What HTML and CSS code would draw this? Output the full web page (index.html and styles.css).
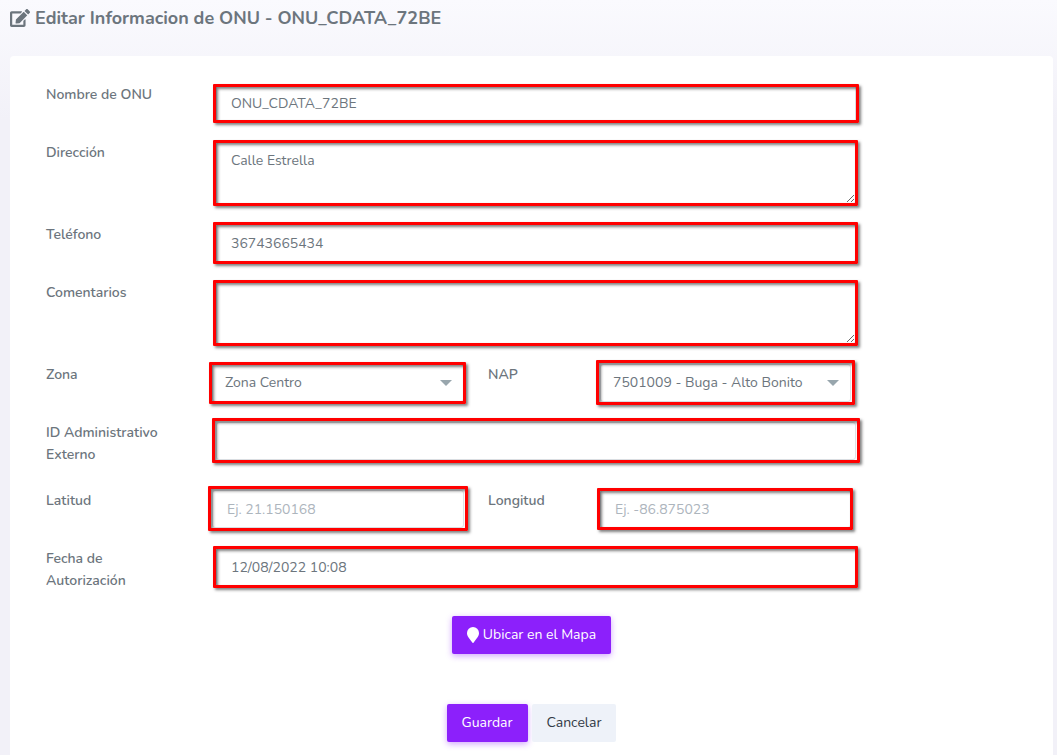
FILE: index.html
```html
<!DOCTYPE html>
<html lang="es">
<head>
	<meta charset="utf-8">
	<title>Editar Informacion de ONU</title>
	<link rel="stylesheet" href="styles.css">
</head>
<body>
	<h1 class="page-title">
		<svg class="title-icon" viewBox="0 0 576 512" aria-hidden="true"><path fill="currentColor" d="M402.6 83.200l90.200 90.200c3.800 3.800 3.800 10 0 13.800L274.400 405.600l-92.800 10.300c-12.400 1.400-22.900-9.100-21.500-21.500l10.300-92.800L388.800 83.200c3.800-3.800 10-3.800 13.800 0zm162-22.900l-48.800-48.800c-15.200-15.200-39.900-15.200-55.200 0l-35.400 35.400c-3.800 3.800-3.800 10 0 13.800l90.200 90.200c3.800 3.800 10 3.800 13.800 0l35.400-35.400c15.200-15.300 15.200-40 0-55.200zM384 346.200V448H64V128h229.800c3.200 0 6.200-1.300 8.500-3.500l40-40c7.600-7.600 2.200-20.500-8.500-20.500H48C21.500 64 0 85.500 0 112v352c0 26.500 21.500 48 48 48h352c26.500 0 48-21.500 48-48V306.200c0-10.700-12.900-16-20.500-8.500l-40 40c-2.200 2.300-3.500 5.300-3.500 8.500z"/></svg>
		Editar Informacion de ONU - ONU_CDATA_72BE
	</h1>
	<main class="card">
		<form id="onu-form">
			<div class="form-row">
				<label for="nombre">Nombre de ONU</label>
				<div class="field mark mark-tight"><input type="text" id="nombre" name="nombre" value="ONU_CDATA_72BE"></div>
			</div>
			<div class="form-row">
				<label for="direccion">Dirección</label>
				<div class="field mark"><textarea id="direccion" name="direccion">Calle Estrella</textarea></div>
			</div>
			<div class="form-row">
				<label for="telefono">Teléfono</label>
				<div class="field mark"><input type="text" id="telefono" name="telefono" value="36743665434"></div>
			</div>
			<div class="form-row">
				<label for="comentarios">Comentarios</label>
				<div class="field mark"><textarea id="comentarios" name="comentarios"></textarea></div>
			</div>
			<div class="form-row form-row-split">
				<label for="zona">Zona</label>
				<div class="field select mark">
					<select id="zona" name="zona"><option>Zona Centro</option></select>
				</div>
				<label class="second" for="nap">NAP</label>
				<div class="field select mark mark-loose">
					<select id="nap" name="nap"><option>7501009 - Buga - Alto Bonito</option></select>
				</div>
			</div>
			<div class="form-row">
				<label for="externo">ID Administrativo Externo</label>
				<div class="field mark mark-loose"><input type="text" id="externo" name="externo"></div>
			</div>
			<div class="form-row form-row-split">
				<label for="latitud">Latitud</label>
				<div class="field mark mark-loose"><input type="text" id="latitud" name="latitud" placeholder="Ej. 21.150168"></div>
				<label class="second" for="longitud">Longitud</label>
				<div class="field mark"><input type="text" id="longitud" name="longitud" placeholder="Ej. -86.875023"></div>
			</div>
			<div class="form-row">
				<label for="fecha">Fecha de Autorización</label>
				<div class="field mark"><input type="text" id="fecha" name="fecha" value="12/08/2022 10:08"></div>
			</div>
			<div class="actions">
				<button type="button" class="btn btn-primary">
					<svg class="pin-icon" viewBox="0 0 12 16" aria-hidden="true"><path fill="currentColor" d="M6 0a6 6 0 0 0-6 6c0 3 1.500 4.500 5.300 9.600a.9.9 0 0 0 1.400 0C10.500 10.500 12 9 12 6a6 6 0 0 0-6-6z"/></svg>
					Ubicar en el Mapa
				</button>
			</div>
			<div class="actions actions-save">
				<button type="submit" class="btn btn-primary">Guardar</button>
				<button type="button" class="btn btn-light">Cancelar</button>
			</div>
		</form>
	</main>
</body>
</html>
```
FILE: styles.css
```css
* {
	box-sizing: border-box;
}

body {
	margin: 0;
	min-height: 100vh;
	display: flex;
	flex-direction: column;
	background: linear-gradient(#fafafe, #f2f1f8 120px);
	color: #6c757d;
	font-family: Nunito, Lato, sans-serif;
	font-size: 14px;
	line-height: 22px;
}

.page-title {
	display: flex;
	align-items: center;
	gap: 5px;
	margin: 0;
	padding: 6px 10px 26px;
	font-size: 18px;
	line-height: 24px;
	font-weight: 700;
}

.title-icon {
	width: 20px;
	height: 18px;
}

.card {
	flex: 1;
	margin: 0 4px 0 10px;
	padding: 28px 36px 14px;
	background-color: #fff;
	border-radius: 4px 4px 0 0;
}

.form-row {
	display: grid;
	grid-template-columns: 170fr 640fr 161fr;
	align-items: start;
	margin-bottom: 20px;
}

.form-row-split {
	grid-template-columns: 166fr 252fr 136fr 251fr 166fr;
}

label {
	padding: 0 36px 4px 0;
	font-weight: 600;
}

label.second {
	padding-left: 24px;
	padding-right: 0;
}

.field {
	position: relative;
}

input,
textarea,
select {
	display: block;
	width: 100%;
	height: 38px;
	padding: 7px 14px;
	border: 1px solid #dee2e6;
	border-radius: 3px;
	background-color: #fff;
	color: #6c757d;
	font: inherit;
}

textarea {
	height: 62px;
}

select {
	appearance: none;
	padding: 7px 12px;
}

::placeholder {
	color: #adb5bd;
	opacity: 1;
}

.select::after {
	content: "";
	position: absolute;
	top: 16px;
	right: 12px;
	border: 6px solid transparent;
	border-top-color: #98a6ad;
	border-bottom: 0;
	pointer-events: none;
}

/* red frame drawn over the field */
.mark::before {
	content: "";
	position: absolute;
	inset: -2px -2px -2px -3px;
	border: 3px solid #f00;
	border-radius: 1px;
	box-shadow: 2px 2px 3px rgba(0, 0, 0, 0.5), inset 2px 2px 3px rgba(0, 0, 0, 0.5);
	pointer-events: none;
}

.mark-tight::before {
	inset: 0 -3px -1px;
}

.mark-loose::before {
	inset: -4px -4px -3px;
}

.actions {
	display: flex;
	justify-content: center;
	gap: 4px;
}

.actions-save {
	margin-top: 50px;
}

.btn {
	display: flex;
	align-items: center;
	gap: 4px;
	height: 38px;
	padding: 0 15px;
	border: 0;
	border-radius: 2px;
	font: inherit;
	cursor: pointer;
}

.btn-primary {
	background-color: #8c20fb;
	color: #fff;
	box-shadow: 0 2px 6px rgba(140, 32, 251, 0.4);
}

.btn-light {
	background-color: #eef2f9;
	color: #323a46;
}

.pin-icon {
	width: 12px;
	height: 16px;
}
```
